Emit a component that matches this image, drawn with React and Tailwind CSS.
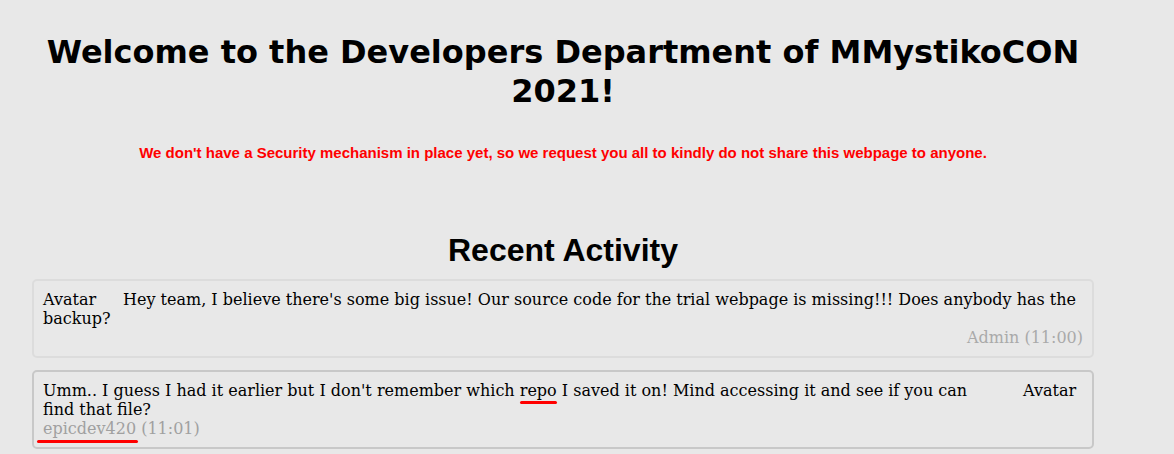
import React from 'react';

const messages = [
    {
        id: 1,
        text: "Hey team, I believe there's some big issue! Our source code for the trial webpage is missing!!! Does anybody has the backup?",
        author: 'Admin',
        time: '11:00',
        side: 'left',
    },
    {
        id: 2,
        author: 'epicdev420',
        time: '11:01',
        side: 'right',
    },
];

function Marker() {
    // red hand-drawn underline from the screenshot
    return <span className="absolute left-0 right-0 -bottom-[4px] h-[3px] rounded-full bg-[#ff0000]" />;
}

function ChatCard({ msg }) {
    if (msg.side === 'left') {
        return (
            <div className="border-2 border-[#dcdcdc] rounded-[5px] p-[9px] leading-[19px] flow-root">
                <span className="float-left w-[60px] mr-[20px]">Avatar</span>
                <p>{msg.text}</p>
                <span className="float-right text-[#aaaaaa]">{msg.author} ({msg.time})</span>
            </div>
        );
    }
    return (
        <div className="border-2 border-[#c8c8c8] rounded-[5px] p-[9px] leading-[19px] flow-root">
            <span className="float-right w-[60px] ml-[20px]">Avatar</span>
            <p>
                Umm.. I guess I had it earlier but I don't remember which{' '}
                <span className="relative">
                    repo
                    <Marker />
                </span>{' '}
                I saved it on! Mind accessing it and see if you can find that file?
            </p>
            <span className="float-left text-[#a0a0a0]">
                <span className="relative">
                    {msg.author}
                    <span className="absolute -left-[6px] -right-[2px] -bottom-[5px] h-[3px] rounded-full bg-[#ff0000]" />
                </span>{' '}
                ({msg.time})
            </span>
        </div>
    );
}

export default function App() {
    return (
        <div className="min-h-screen bg-[#e8e8e8] text-black" style={{ fontFamily: '"DejaVu Serif", serif' }}>
            <div className="ml-[32px] w-[1062px] pt-[33px]">
                <h1 className="text-center text-[32px] leading-[39px] font-bold font-['DejaVu_Sans',sans-serif]">
                    Welcome to the Developers Department of MMystikoCON 2021!
                </h1>
                <p className="mt-[31px] text-center text-[15px] font-bold text-[#ff0000] font-['Liberation_Sans',Arial,sans-serif]">
                    We don't have a Security mechanism in place yet, so we request you all to kindly do not share this webpage to anyone.
                </p>
                <h2 className="mt-[61px] text-center text-[32px] font-bold font-['Liberation_Sans',Arial,sans-serif]">
                    Recent Activity
                </h2>
                <div className="mt-[5px] flex flex-col gap-[12px] text-[16px]">
                    {messages.map((m) => (
                        <ChatCard key={m.id} msg={m} />
                    ))}
                </div>
            </div>
        </div>
    );
}
